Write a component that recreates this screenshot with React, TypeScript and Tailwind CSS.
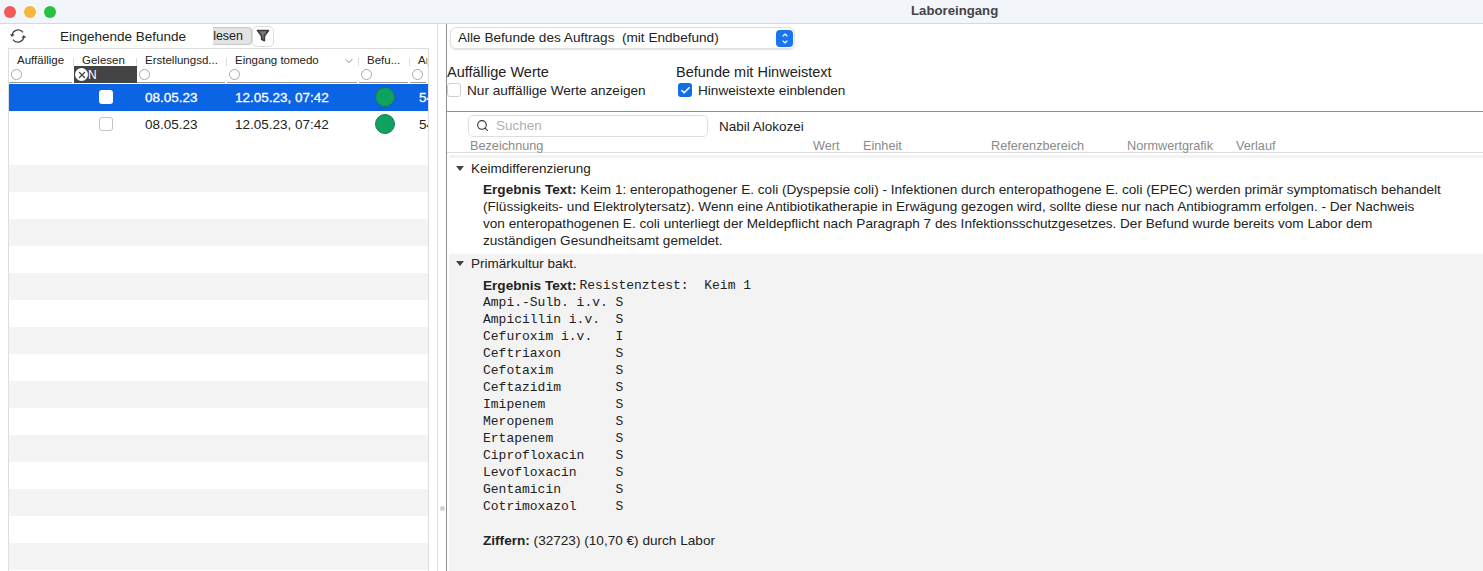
import { Search, ChevronDown, ChevronUp, Check, X } from 'lucide-react';

const sans = "font-['Liberation_Sans',Arial,sans-serif]";

const columns = [
  { label: 'Auffällige', width: 'w-[65px]' },
  { label: 'Gelesen', width: 'w-[63px]' },
  { label: 'Erstellungsd...', width: 'w-[90px]' },
  { label: 'Eingang tomedo', width: 'w-[132px]' },
  { label: 'Befu...', width: 'w-[51px]' },
  { label: 'An', width: 'w-[18px]' },
];

const antibiotics = [
  'Ampi.-Sulb. i.v. S',
  'Ampicillin i.v.  S',
  'Cefuroxim i.v.   I',
  'Ceftriaxon       S',
  'Cefotaxim        S',
  'Ceftazidim       S',
  'Imipenem         S',
  'Meropenem        S',
  'Ertapenem        S',
  'Ciprofloxacin    S',
  'Levofloxacin     S',
  'Gentamicin       S',
  'Cotrimoxazol     S',
];

function Radio() {
  return <span className="block h-[11px] w-[11px] rounded-full border border-[#a8a8a8] bg-white" />;
}

function SyncIcon() {
  return (
    <svg viewBox="0 0 18 16" className="h-[16px] w-[18px]" fill="none" stroke="#444" strokeWidth="1.3">
      <path d="M3.2 7.4A6 6 0 0 1 14 4.4" />
      <path d="M14.8 8.6A6 6 0 0 1 4 11.6" />
      <path d="M0.8 6.2h4.8L3.2 9z" fill="#444" stroke="none" />
      <path d="M12.4 9.8h4.8L14.8 7z" fill="#444" stroke="none" />
    </svg>
  );
}

function FunnelIcon() {
  return (
    <svg viewBox="0 0 14 14" className="h-[14px] w-[14px]" fill="#777" stroke="#3c3c3c" strokeWidth="1.6" strokeLinejoin="round">
      <path d="M1.5 1.5h11L8.4 7v4.8L5.6 10.4V7z" />
    </svg>
  );
}

function Triangle() {
  return <span className="h-0 w-0 border-x-[4px] border-t-[5px] border-x-transparent border-t-[#444]" />;
}

function HeaderCell({ label, width, index }: { label: string; width: string; index: number }) {
  const isFilter = label === 'Gelesen';
  return (
    <div className={`${width} shrink-0 overflow-hidden`}>
      <div className="relative flex h-[17px] items-center justify-between px-[8px] pt-[6px] text-[11.5px] whitespace-nowrap text-[#222] after:absolute after:right-0 after:bottom-0 after:h-[8px] after:w-px after:bg-[#ddd]">
        <span>{label}</span>
        {index === 3 && <ChevronDown className="-mr-[4px] h-3 w-3 text-[#888]" />}
      </div>
      {isFilter ? (
        <div className="flex h-[17px] items-center bg-[#444] pl-[1px] text-[12px] text-white">
          <span className="flex h-[13px] w-[13px] items-center justify-center rounded-full bg-white">
            <X className="h-[10px] w-[10px] text-[#444]" strokeWidth={3} />
          </span>
          <span>N</span>
        </div>
      ) : (
        <div className="mr-[2px] flex h-[17px] items-center border-b border-[#999] pl-[2px]">
          <Radio />
        </div>
      )}
    </div>
  );
}

function Row({ selected }: { selected?: boolean }) {
  return (
    <div className={`flex h-[27px] shrink-0 items-center text-[13.5px] ${selected ? 'bg-[#0a64e4] text-white [-webkit-text-stroke:0.3px_white]' : 'bg-white text-[#222]'}`}>
      <div className="w-[65px] shrink-0" />
      <div className="flex w-[63px] shrink-0 justify-center pb-[2px]">
        <span className={`h-[14px] w-[14px] rounded-[3px] ${selected ? 'bg-white' : 'border border-[#c4c4c4] bg-white'}`} />
      </div>
      <div className="w-[90px] shrink-0 pt-[2px] pl-[8px]">08.05.23</div>
      <div className="w-[132px] shrink-0 pt-[2px] pl-[8px]">12.05.23, 07:42</div>
      <div className="flex w-[51px] shrink-0 justify-center pb-[2px]">
        <span className="h-[20px] w-[20px] rounded-full border border-[#1c7a50] bg-[#0da35e]" />
      </div>
      <div className="w-[18px] shrink-0 overflow-hidden pt-[2px] pl-[9px] whitespace-nowrap">54</div>
    </div>
  );
}

export default function App() {
  return (
    <div className={`${sans} flex h-[571px] w-[1483px] flex-col overflow-hidden bg-white text-[#222]`}>
      <div className="flex h-[24px] shrink-0 items-center border-b border-[#d8d8d8] bg-[#f2f5fa] pl-[4px]">
        <div className="flex w-[907px] gap-[8px]">
          <span className="h-[12px] w-[12px] rounded-full bg-[#f25a55]" />
          <span className="h-[12px] w-[12px] rounded-full bg-[#f8b73c]" />
          <span className="h-[12px] w-[12px] rounded-full bg-[#27c23f]" />
        </div>
        <span className="pb-[1px] text-[13.2px] font-bold text-[#444]">Laboreingang</span>
      </div>

      <div className="flex min-h-0 flex-1">
        <div className="flex w-[438px] shrink-0 flex-col border-r border-[#dcdcdc]">
          <div className="flex h-[24px] shrink-0 items-center pl-[9px]">
            <SyncIcon />
            <span className="ml-[33px] pt-[2px] text-[13.5px]">Eingehende Befunde</span>
            <span className="ml-[27px] flex h-[18px] w-[39px] items-center rounded-r-[4px] border border-l-0 border-[#c9c9c9] bg-[#e3e3e3] text-[12.5px]">lesen</span>
            <span className="flex h-[21px] w-[22px] items-center justify-center rounded-[5px] border border-[#dcdcdc] bg-white">
              <FunnelIcon />
            </span>
          </div>
          <div className="ml-[8px] flex min-h-0 w-[421px] flex-1 flex-col overflow-hidden border-x border-t border-[#dedede]">
            <div className="flex h-[35px] shrink-0">
              {columns.map((c, i) => (
                <HeaderCell key={c.label} label={c.label} width={c.width} index={i} />
              ))}
            </div>
            <Row selected />
            <Row />
            {Array.from({ length: 16 }, (_, i) => (
              <div key={i} className={`h-[27px] shrink-0 ${i % 2 === 1 ? 'bg-[#f4f4f4]' : 'bg-white'}`} />
            ))}
          </div>
        </div>

        <div className="flex w-[8px] shrink-0 items-end justify-center pb-[60px]">
          <span className="h-[5px] w-[5px] rounded-full bg-[#d4d4d4]" />
        </div>

        <div className="flex min-w-0 flex-1 flex-col border-l border-[#8e8e8e]">
          <div className="flex h-[87px] shrink-0 flex-col">
            <div className="mt-[3px] ml-[3px] flex h-[22px] w-[345px] items-center justify-between rounded-[6px] border border-[#e0e0e0] pr-[1px] pl-[7px] text-[13.6px] shadow-[0_1px_1px_rgba(0,0,0,0.12)]">
              <span className="whitespace-pre">Alle Befunde des Auftrags  (mit Endbefund)</span>
              <span className="flex h-[17px] w-[17px] flex-col items-center justify-center rounded-[4px] bg-[#1a73f0] text-white">
                <ChevronUp className="-mb-[1px] h-[8px] w-[10px]" strokeWidth={3.5} />
                <ChevronDown className="h-[8px] w-[10px]" strokeWidth={3.5} />
              </span>
            </div>
            <div className="mt-[14px] flex">
              <div className="w-[229px]">
                <div className="text-[14.5px] leading-[18px]">Auffällige Werte</div>
                <label className="flex h-[18px] items-center">
                  <span className="h-[14px] w-[14px] rounded-[3px] border border-[#cfcfcf] bg-white" />
                  <span className="ml-[6px] pt-[2px] text-[13.6px]">Nur auffällige Werte anzeigen</span>
                </label>
              </div>
              <div>
                <div className="text-[14.5px] leading-[18px]">Befunde mit Hinweistext</div>
                <label className="flex h-[18px] items-center pl-[2px]">
                  <span className="flex h-[14px] w-[14px] items-center justify-center rounded-[3px] bg-[#0f6fe8]">
                    <Check className="h-[11px] w-[11px] text-white" strokeWidth={3.5} />
                  </span>
                  <span className="ml-[6px] pt-[2px] text-[13.6px]">Hinweistexte einblenden</span>
                </label>
              </div>
            </div>
          </div>

          <div className="flex min-h-0 flex-1 flex-col overflow-hidden border-t border-[#8e8e8e]">
            <div className="flex h-[26px] shrink-0 items-center pt-[1px] pl-[21px]">
              <div className="flex h-[22px] w-[240px] items-center gap-[7px] rounded-[5px] border border-[#dedede] pl-[7px] text-[13.5px] text-[#b0b0b0]">
                <Search className="h-[13px] w-[13px] text-[#333]" strokeWidth={2} />
                <span className="pt-[2px]">Suchen</span>
              </div>
              <span className="ml-[11px] pt-[3px] text-[13.5px]">Nabil Alokozei</span>
            </div>
            <div className="flex h-[15px] shrink-0 items-center border-b border-[#dedede] pt-[3px] text-[12.7px] text-[#8a8a8a]">
              <span className="w-[366px] pl-[23px]">Bezeichnung</span>
              <span className="w-[50px]">Wert</span>
              <span className="w-[128px]">Einheit</span>
              <span className="w-[136px]">Referenzbereich</span>
              <span className="w-[109px]">Normwertgrafik</span>
              <span>Verlauf</span>
            </div>
            <div className="mt-[2px] ml-[2px] h-[3px] shrink-0 bg-[#f3f3f3]" />

            <div className="h-[96px] shrink-0 bg-white pl-[9px]">
              <div className="flex h-[21px] items-center text-[13.5px]">
                <Triangle />
                <span className="ml-[7px] pt-[2px]">Keimdifferenzierung</span>
              </div>
              <p className="mt-[2px] pl-[27px] text-[13.6px] leading-[17px] whitespace-nowrap">
                <b>Ergebnis Text:</b> Keim 1: enteropathogener E. coli (Dyspepsie coli) - Infektionen durch enteropathogene E. coli (EPEC) werden primär symptomatisch behandelt
                <br />
                (Flüssigkeits- und Elektrolytersatz). Wenn eine Antibiotikatherapie in Erwägung gezogen wird, sollte diese nur nach Antibiogramm erfolgen. - Der Nachweis
                <br />
                von enteropathogenen E. coli unterliegt der Meldepflicht nach Paragraph 7 des Infektionsschutzgesetzes. Der Befund wurde bereits vom Labor dem
                <br />
                zuständigen Gesundheitsamt gemeldet.
              </p>
            </div>

            <div className="ml-[2px] min-h-0 flex-1 bg-[#f3f3f3] pl-[7px]">
              <div className="flex h-[19px] items-center text-[13.5px]">
                <Triangle />
                <span className="ml-[7px] pt-[2px]">Primärkultur bakt.</span>
              </div>
              <div className="mt-[4px] pl-[27px] text-[13.6px] leading-[17px]">
                <div className="flex h-[17px] items-center">
                  <b className="whitespace-nowrap">Ergebnis Text:</b>
                  <span className="ml-[3px] font-['Liberation_Mono',monospace] text-[13px] whitespace-pre">Resistenztest:  Keim 1</span>
                </div>
                {antibiotics.map((a) => (
                  <div key={a} className="h-[17px] font-['Liberation_Mono',monospace] text-[13px] whitespace-pre">{a}</div>
                ))}
                <div className="mt-[17px]">
                  <b>Ziffern:</b> (32723) (10,70 €) durch Labor
                </div>
              </div>
            </div>
          </div>
        </div>
      </div>
    </div>
  );
}
